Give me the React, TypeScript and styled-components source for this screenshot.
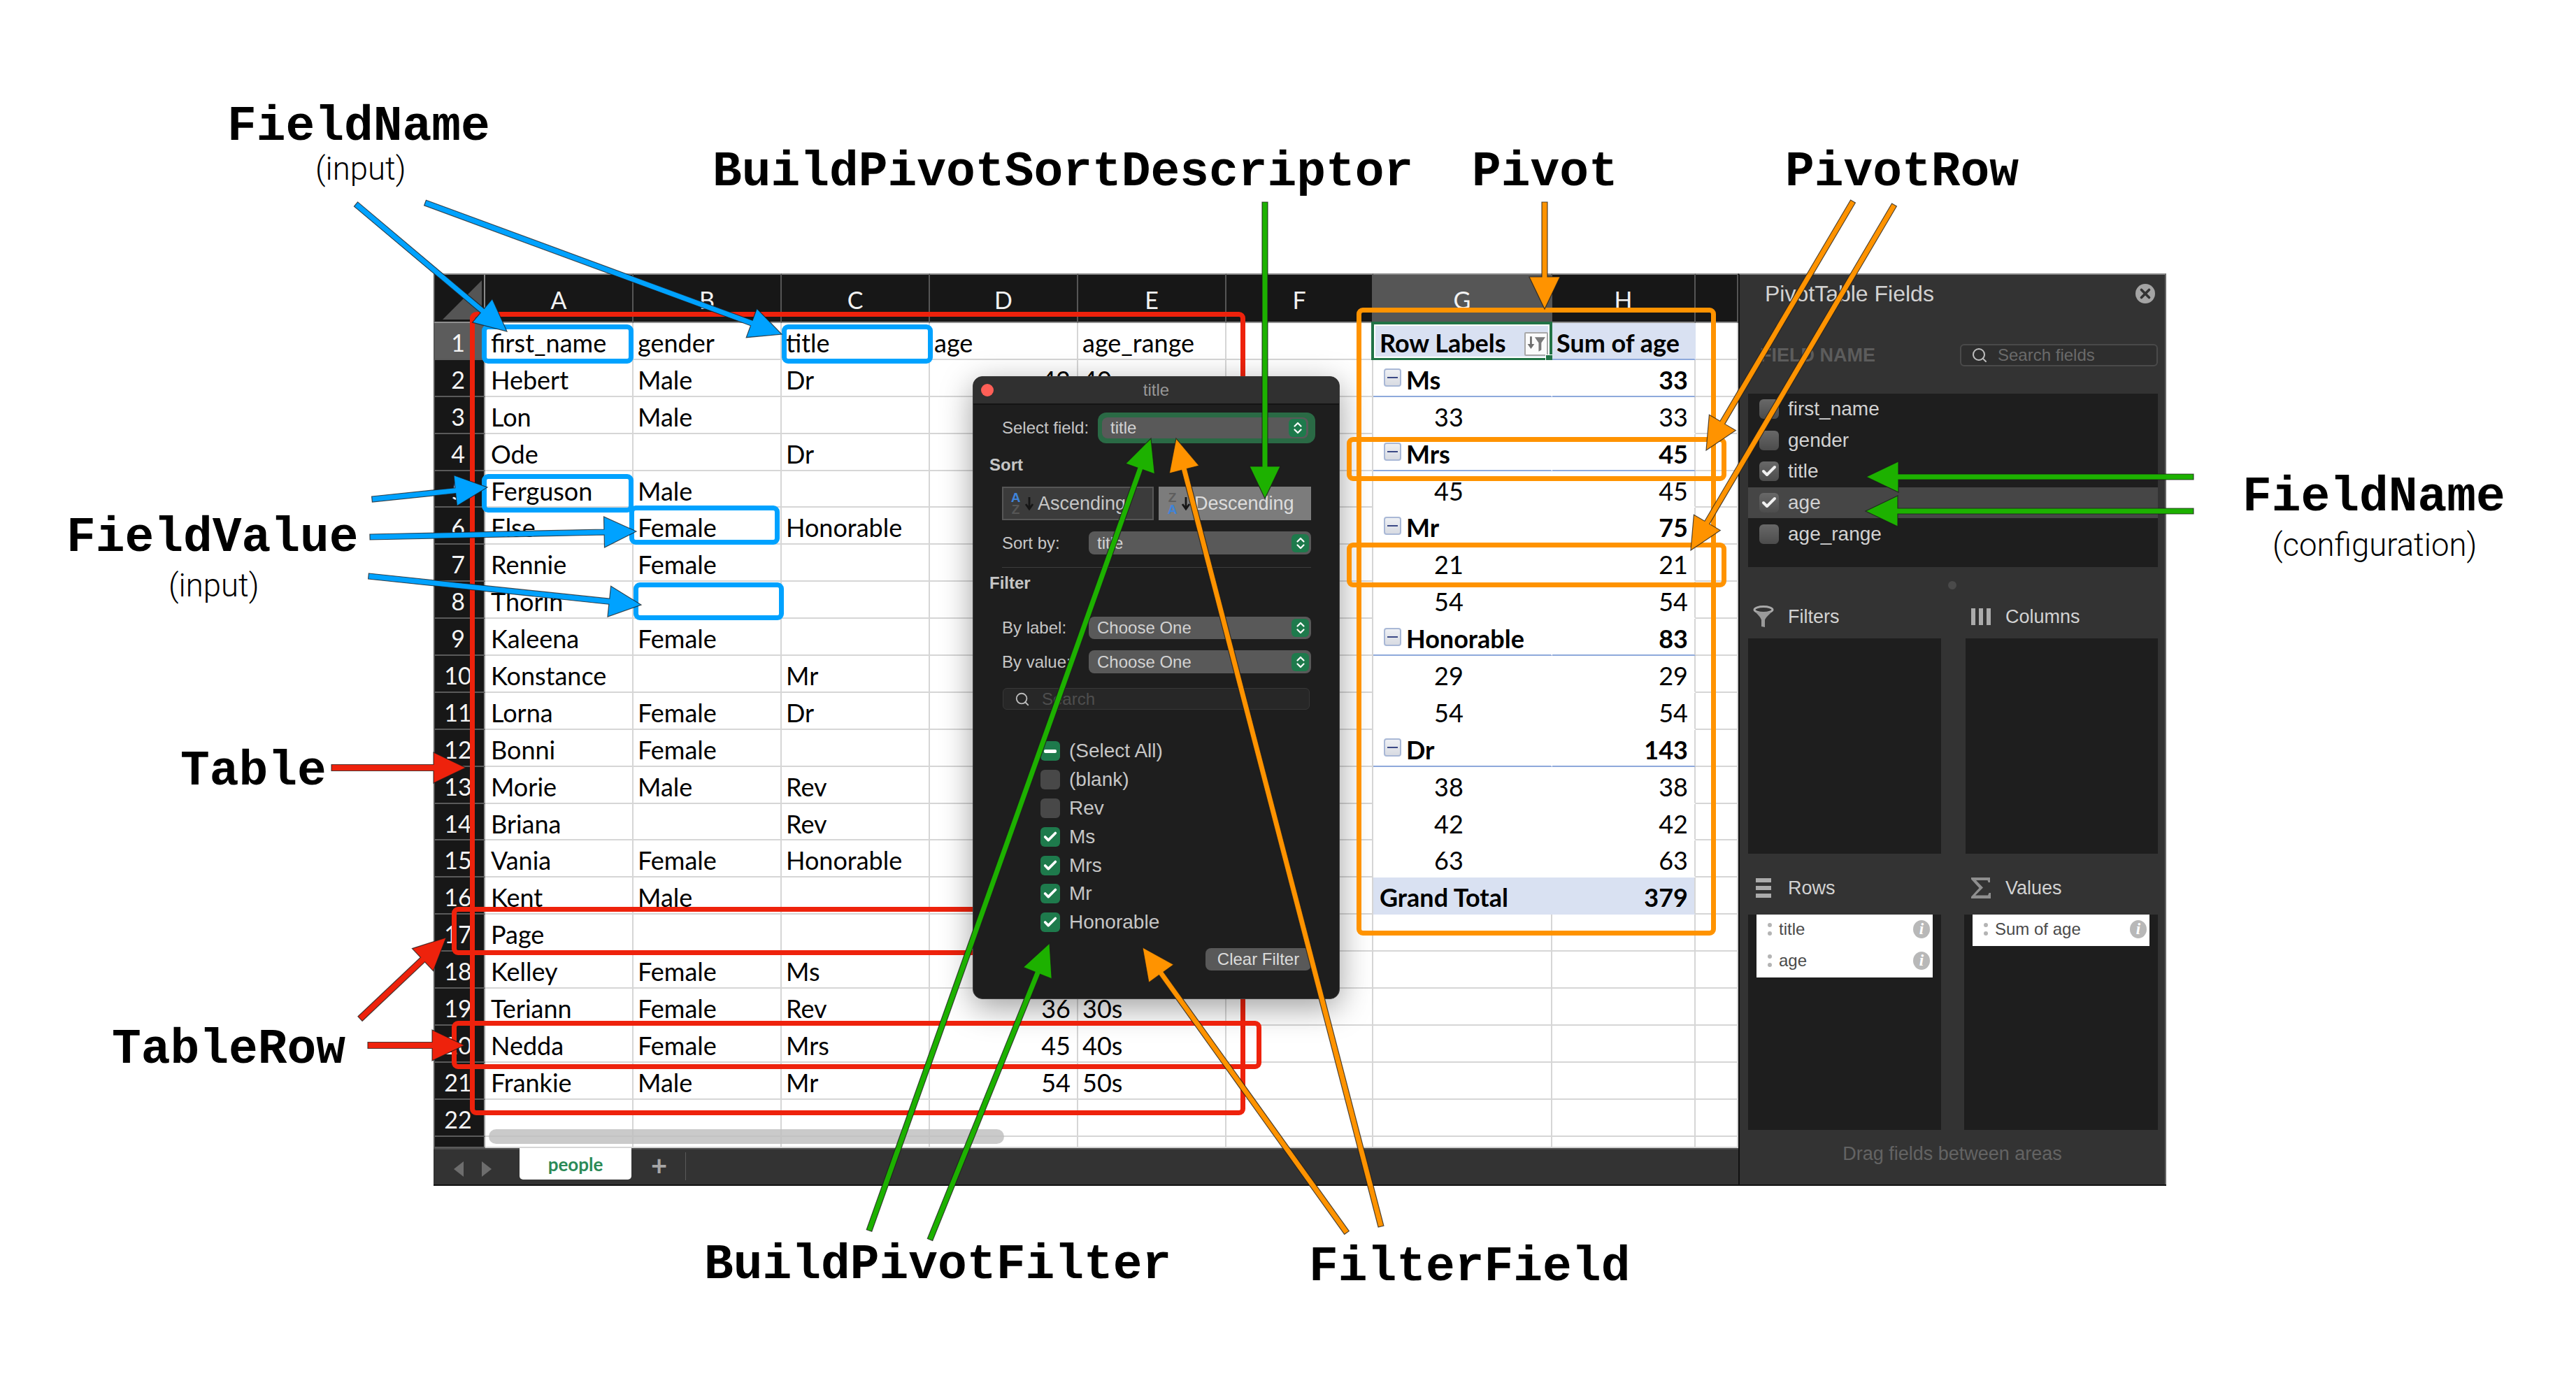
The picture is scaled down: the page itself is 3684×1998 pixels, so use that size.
import React from 'react';
import styled, { createGlobalStyle } from 'styled-components';
import { Check, Search, X } from 'lucide-react';

const BLUE = '#00a2ff';
const RED = '#ee220c';
const GREEN = '#1db100';
const ORANGE = '#ff9300';

const GlobalStyle = createGlobalStyle`
  html, body {
    margin: 0;
    background: #fff;
    font-family: "Liberation Sans", Arial, sans-serif;
  }
  * { box-sizing: border-box; }
`;

const Figure = styled.div`
  position: relative;
  width: 3684px;
  height: 1998px;
  padding: 391px 0 0 620px;
  overflow: hidden;
`;

const AppWindow = styled.div`
  display: flex;
  width: 2478px;
  height: 1305px;
  border-bottom: 2px solid #111;
`;

const Sheet = styled.div`
  position: relative;
  width: 1866px;
  display: flex;
  flex-direction: column;
  font-family: Lato, "Open Sans", sans-serif;
`;

const Grid = styled.div`
  display: grid;
  grid-template-columns: 74px 212px 212px 212px 212px 212px 210px 256px 205px 61px;
  grid-template-rows: 71px repeat(22, 52.9px) 1fr;
  flex: 1;
  min-height: 0;
`;

const ColHead = styled.div<{ $active?: boolean }>`
  display: flex;
  align-items: center;
  justify-content: center;
  padding-top: 4px;
  font-size: 34px;
  color: #f2f2f2;
  background: ${p => (p.$active ? '#565656' : '#171717')};
  border-top: 2px solid #8a8a8a;
  border-right: 2px solid #555;
  border-bottom: 2px solid #8f8f8f;
`;

const Corner = styled(ColHead)`
  position: relative;
  border-left: 2px solid #555;
  border-right: 2px solid #888;
  &::after {
    content: '';
    position: absolute;
    right: 3px;
    bottom: 3px;
    border-style: solid;
    border-width: 0 0 56px 56px;
    border-color: transparent transparent #555 transparent;
  }
`;

const RowHead = styled.div<{ $active?: boolean }>`
  display: flex;
  align-items: center;
  justify-content: center;
  padding: 4px 4px 0 0;
  font-size: 34px;
  color: #f4f4f4;
  background: ${p => (p.$active ? '#5c5c5c' : '#171717')};
  border-left: 2px solid #555;
  border-right: 2px solid #999;
  border-bottom: 2px solid #5a5a5a;
`;

type Line = 'grid' | 'none' | 'blue';

const Cell = styled.div<{ $bold?: boolean; $align?: string; $indent?: number; $fill?: string; $line?: Line; $noRight?: boolean }>`
  position: relative;
  display: flex;
  align-items: center;
  justify-content: ${p => p.$align || 'flex-start'};
  gap: 7px;
  padding: 5px 9px 0 ${p => p.$indent ?? 7}px;
  font-size: 36px;
  font-weight: ${p => (p.$bold ? 700 : 400)};
  color: #000;
  white-space: nowrap;
  background: ${p => p.$fill || '#fff'};
  border-right: 2px solid ${p => (p.$noRight ? (p.$fill || '#fff') : '#d6d6d6')};
  border-bottom: 2px solid ${p => (p.$line === 'blue' ? '#8ea9db' : p.$line === 'none' ? (p.$fill || '#fff') : '#d6d6d6')};
`;

const SelectedCell = styled(Cell)`
  &::before {
    content: '';
    position: absolute;
    inset: -2px -2px -3px -3px;
    border: 4px solid #217346;
    box-shadow: inset 0 0 0 2px #fff;
    pointer-events: none;
  }
  &::after {
    content: '';
    position: absolute;
    right: -5px;
    bottom: -7px;
    width: 11px;
    height: 11px;
    background: #217346;
    border: 1px solid #fff;
  }
`;

const FilterButton = styled.span`
  display: flex;
  align-items: center;
  justify-content: center;
  width: 34px;
  height: 34px;
  margin: 4px -5px 0 auto;
  background: #fbfbfb;
  border: 2px solid #a8a8a8;
  border-radius: 2px;
`;

const Collapse = styled.span`
  display: flex;
  align-items: center;
  justify-content: center;
  width: 25px;
  height: 26px;
  margin-top: -5px;
  background: linear-gradient(#eef0f4, #d8dbe2);
  border: 2px solid #a9b8d6;
  border-radius: 4px;
  &::after {
    content: '';
    width: 15px;
    height: 2px;
    background: #3c4a86;
  }
`;

const HScroll = styled.div`
  position: absolute;
  left: 79px;
  top: 1224px;
  width: 737px;
  height: 21px;
  border-radius: 11px;
  background: rgba(190, 190, 190, 0.82);
`;

const TabBar = styled.div`
  display: flex;
  align-items: flex-start;
  height: 52px;
  flex-shrink: 0;
  background: #333;
  border-top: 2px solid #4d4d4d;
`;

const TabArrows = styled.div`
  display: flex;
  align-items: center;
  gap: 26px;
  width: 123px;
  height: 50px;
  padding: 6px 0 0 29px;
`;

const TabArrow = styled.span<{ $right?: boolean }>`
  border-style: solid;
  border-color: transparent;
  border-width: 11px 0;
  ${p => (p.$right ? 'border-left: 14px solid #6d6d6d;' : 'border-right: 14px solid #6d6d6d;')}
`;

const ActiveTab = styled.div`
  display: flex;
  align-items: center;
  justify-content: center;
  width: 160px;
  height: 45px;
  margin-top: -2px;
  font-size: 26px;
  font-weight: 700;
  color: #2b8a57;
  background: #fff;
  border-radius: 0 0 5px 5px;
`;

const AddTab = styled.div`
  width: 78px;
  height: 40px;
  margin-top: 4px;
  padding-left: 28px;
  font-size: 40px;
  line-height: 36px;
  font-weight: 700;
  color: #a6a6a6;
  border-right: 1px solid #5a5a5a;
`;

/* Pivot field list */

const Panel = styled.div`
  width: 612px;
  display: flex;
  flex-direction: column;
  background: #333;
  border-left: 2px solid #111;
  border-right: 2px solid #666;
  border-top: 2px solid #8a8a8a;
  color: #d2d2d2;
`;

const PanelHeader = styled.div`
  display: flex;
  align-items: center;
  justify-content: space-between;
  height: 54px;
  padding: 0 14px 0 36px;
  font-size: 32px;
`;

const CloseButton = styled.span`
  display: flex;
  align-items: center;
  justify-content: center;
  width: 28px;
  height: 28px;
  border-radius: 50%;
  background: #a4a4a4;
  color: #333;
`;

const SearchRow = styled.div`
  display: flex;
  align-items: center;
  justify-content: space-between;
  margin: 45px 10px 0 29px;
  height: 32px;
`;

const FieldHeading = styled.span`
  font-size: 27px;
  font-weight: 700;
  color: #5c5c5c;
`;

const FieldSearch = styled.div`
  display: flex;
  align-items: center;
  gap: 14px;
  width: 283px;
  height: 32px;
  padding-left: 14px;
  font-size: 24px;
  color: #6a6a6a;
  background: #2e2e2e;
  border: 2px solid #4a4a4a;
  border-radius: 6px;
  svg { color: #bdbdbd; }
`;

const FieldList = styled.div`
  height: 248px;
  margin: 39px 10px 0 12px;
  background: #1e1e1e;
`;

const FieldRow = styled.div<{ $active?: boolean }>`
  display: flex;
  align-items: center;
  gap: 13px;
  height: 44.6px;
  padding-left: 16px;
  font-size: 28px;
  background: ${p => (p.$active ? '#464646' : 'transparent')};
`;

const FieldCheck = styled.span`
  display: flex;
  align-items: center;
  justify-content: center;
  width: 28px;
  height: 28px;
  border-radius: 6px;
  color: #f0f0f0;
  background: linear-gradient(#686868, #4c4c4c);
`;

const SplitHandle = styled.div`
  width: 12px;
  height: 12px;
  margin: 20px auto 0;
  border-radius: 50%;
  background: #4a4a4a;
`;

const AreaGrid = styled.div`
  display: grid;
  grid-template-columns: 276px 277px;
  grid-template-rows: 66px 308px 87px 308px;
  column-gap: 33px;
  margin: 4px 0 0 12px;
`;

const AreaHead = styled.div<{ $second?: boolean; $low?: boolean }>`
  display: flex;
  align-items: flex-end;
  gap: 20px;
  padding: 0 0 ${p => (p.$low ? 22 : 15)}px ${p => (p.$second ? 8 : 6)}px;
  font-size: 27px;
`;

const IconSlot = styled.span`
  display: flex;
  align-items: center;
  justify-content: center;
  width: 31px;
  height: 32px;
  color: #a9a9a9;
`;

const AreaBox = styled.div<{ $inset?: boolean }>`
  margin-left: ${p => (p.$inset ? 2 : 0)}px;
  padding: 0 12px;
  background: #1e1e1e;
`;

const AreaItem = styled.div`
  display: flex;
  align-items: center;
  gap: 10px;
  height: 45px;
  padding: 0 4px 3px 16px;
  font-size: 24px;
  color: #4a4a4a;
  background: #fff;
`;

const DragHandle = styled.span`
  display: flex;
  flex-direction: column;
  gap: 6px;
  &::before, &::after {
    content: '';
    width: 6px;
    height: 6px;
    border-radius: 50%;
    background: #b4b4b4;
  }
`;

const InfoIcon = styled.span`
  display: flex;
  align-items: center;
  justify-content: center;
  width: 24px;
  height: 26px;
  margin-left: auto;
  border-radius: 50%;
  font: italic 700 23px "Liberation Serif", serif;
  color: #fff;
  background: #b8b8b8;
`;

const DragHint = styled.div`
  flex: 1;
  display: flex;
  align-items: center;
  justify-content: center;
  padding: 0 0 10px 0;
  font-size: 27px;
  color: #636363;
`;

/* Floating filter dialog */

const Dialog = styled.div`
  position: absolute;
  left: 1391px;
  top: 538px;
  z-index: 2;
  width: 525px;
  height: 891px;
  background: #1e1e1e;
  border: 1px solid #3e3e3e;
  border-radius: 14px;
  box-shadow: 0 12px 46px rgba(0, 0, 0, 0.38);
  font-size: 24px;
  color: #c6c6c6;
`;

const DialogTitle = styled.div`
  position: relative;
  display: flex;
  align-items: center;
  justify-content: center;
  height: 40px;
  color: #979797;
  background: #303030;
  border-bottom: 2px solid #141414;
  border-radius: 13px 13px 0 0;
  &::before {
    content: '';
    position: absolute;
    left: 11px;
    top: 10px;
    width: 18px;
    height: 18px;
    border-radius: 50%;
    background: #ff5f57;
  }
`;

const DialogBody = styled.div`
  display: flex;
  flex-direction: column;
  padding: 0 40px 0 41px;
`;

const FormRow = styled.div<{ $top: number }>`
  display: flex;
  align-items: center;
  margin-top: ${p => p.$top}px;
`;

const FormLabel = styled.span`
  width: 124px;
  flex-shrink: 0;
  white-space: nowrap;
`;

const SectionTitle = styled.div<{ $top: number }>`
  height: 28px;
  margin: ${p => p.$top}px 0 0 -18px;
  font-weight: 700;
  line-height: 28px;
`;

const SelectRing = styled.div`
  flex: 1;
  margin: 0 -6px 0 13px;
  padding: 7px 10px 7px 6px;
  border-radius: 12px;
  background: #2a6a45;
`;

const Select = styled.div<{ $h: number }>`
  flex: 1;
  display: flex;
  align-items: center;
  justify-content: space-between;
  height: ${p => p.$h}px;
  padding: 0 3px 0 12px;
  color: #d2d2d2;
  background: #595959;
  border-radius: 8px;
`;

const StepperButton = styled.span`
  display: flex;
  align-items: center;
  justify-content: center;
  width: 25px;
  height: 26px;
  border-radius: 6px;
  color: #fff;
  background: #1e7a4c;
`;

const SortRow = styled.div`
  display: grid;
  grid-template-columns: 217px 218px;
  column-gap: 7px;
  margin-top: 17px;
`;

const SortButton = styled.div<{ $on?: boolean }>`
  display: flex;
  align-items: center;
  gap: 5px;
  height: 48px;
  padding-left: 10px;
  overflow: hidden;
  white-space: nowrap;
  font-size: 27px;
  color: ${p => (p.$on ? '#dcdcdc' : '#c6c6c6')};
  background: ${p => (p.$on ? '#7c7c7c' : '#3b3b3b')};
  border: 2px solid ${p => (p.$on ? '#7c7c7c' : '#565656')};
`;

const SortLetters = styled.span`
  display: flex;
  flex-direction: column;
  width: 15px;
  font-size: 19px;
  font-weight: 700;
  line-height: 17px;
  text-align: center;
`;

const SortLetter = styled.span<{ $hot?: boolean; $dim: string }>`
  color: ${p => (p.$hot ? '#3f83d8' : p.$dim)};
`;

const Divider = styled.div`
  height: 1px;
  margin-top: 18px;
  background: #3d3d3d;
`;

const DialogSearch = styled.div`
  display: flex;
  align-items: center;
  gap: 17px;
  height: 31px;
  margin: 21px 2px 0 1px;
  padding-left: 16px;
  color: #4e4e4e;
  background: #272727;
  border: 1px solid #383838;
  border-radius: 6px;
  svg { color: #bcbcbc; }
`;

const CheckList = styled.div`
  margin: 39px 0 0 55px;
  font-size: 28px;
`;

const CheckRow = styled.div`
  display: flex;
  align-items: center;
  gap: 13px;
  height: 40.8px;
`;

const CheckMark = styled.span<{ $on?: boolean }>`
  display: flex;
  align-items: center;
  justify-content: center;
  width: 28px;
  height: 28px;
  border-radius: 6px;
  color: #fff;
  background: ${p => (p.$on ? '#1e7a4c' : '#484848')};
`;

const MixedDash = styled.span`
  width: 18px;
  height: 5px;
  border-radius: 2px;
  background: #fff;
`;

const ClearButton = styled.div`
  align-self: flex-end;
  display: flex;
  align-items: center;
  justify-content: center;
  width: 151px;
  height: 32px;
  margin-top: 16px;
  color: #dcdcdc;
  background: #595959;
  border-radius: 8px;
`;

/* Annotations drawn over the screenshot */

const Callout = styled.div<{ $x: number; $y: number; $w: number; $h: number; $color: string; $above?: boolean }>`
  position: absolute;
  left: ${p => p.$x}px;
  top: ${p => p.$y}px;
  width: ${p => p.$w}px;
  height: ${p => p.$h}px;
  z-index: ${p => (p.$above ? 3 : 1)};
  border: 7px solid ${p => p.$color};
  border-radius: 9px;
`;

const Label = styled.div<{ $x: number; $y: number }>`
  position: absolute;
  left: ${p => p.$x}px;
  top: ${p => p.$y}px;
  font-family: "Liberation Mono", "Courier New", monospace;
  font-size: 69.6px;
  font-weight: 700;
  line-height: 1;
  color: #000;
  white-space: nowrap;
`;

const SubLabel = styled.div<{ $x: number; $y: number }>`
  position: absolute;
  left: ${p => p.$x}px;
  top: ${p => p.$y}px;
  font-family: Roboto, "Liberation Sans", sans-serif;
  font-size: 45.5px;
  font-weight: 300;
  line-height: 1;
  color: #000;
  white-space: nowrap;
`;

const Overlay = styled.svg`
  position: absolute;
  left: 0;
  top: 0;
  z-index: 4;
  pointer-events: none;
`;

const columns = ['A', 'B', 'C', 'D', 'E', 'F', 'G', 'H'];

const people: string[][] = [
  ['first_name', 'gender', 'title', 'age', 'age_range'],
  ['Hebert', 'Male', 'Dr', '42', '40s'],
  ['Lon', 'Male', '', '', ''],
  ['Ode', '', 'Dr', '', ''],
  ['Ferguson', 'Male', '', '', ''],
  ['Else', 'Female', 'Honorable', '', ''],
  ['Rennie', 'Female', '', '', ''],
  ['Thorin', '', '', '', ''],
  ['Kaleena', 'Female', '', '', ''],
  ['Konstance', '', 'Mr', '', ''],
  ['Lorna', 'Female', 'Dr', '', ''],
  ['Bonni', 'Female', '', '', ''],
  ['Morie', 'Male', 'Rev', '', ''],
  ['Briana', '', 'Rev', '', ''],
  ['Vania', 'Female', 'Honorable', '', ''],
  ['Kent', 'Male', '', '', ''],
  ['Page', '', '', '', ''],
  ['Kelley', 'Female', 'Ms', '', ''],
  ['Teriann', 'Female', 'Rev', '36', '30s'],
  ['Nedda', 'Female', 'Mrs', '45', '40s'],
  ['Frankie', 'Male', 'Mr', '54', '50s'],
  ['', '', '', '', ''],
];

type PivotRow = { label: string; value: string; kind: 'group' | 'leaf' | 'total' };

const pivot: PivotRow[] = [
  { label: 'Ms', value: '33', kind: 'group' },
  { label: '33', value: '33', kind: 'leaf' },
  { label: 'Mrs', value: '45', kind: 'group' },
  { label: '45', value: '45', kind: 'leaf' },
  { label: 'Mr', value: '75', kind: 'group' },
  { label: '21', value: '21', kind: 'leaf' },
  { label: '54', value: '54', kind: 'leaf' },
  { label: 'Honorable', value: '83', kind: 'group' },
  { label: '29', value: '29', kind: 'leaf' },
  { label: '54', value: '54', kind: 'leaf' },
  { label: 'Dr', value: '143', kind: 'group' },
  { label: '38', value: '38', kind: 'leaf' },
  { label: '42', value: '42', kind: 'leaf' },
  { label: '63', value: '63', kind: 'leaf' },
  { label: 'Grand Total', value: '379', kind: 'total' },
];

type Arrow = { from: [number, number]; to: [number, number]; color: string; shaft?: number };

const arrows: Arrow[] = [
  { from: [509, 292], to: [725, 474], color: BLUE },
  { from: [608, 290], to: [1118, 478], color: BLUE },
  { from: [532, 714], to: [697, 697], color: BLUE },
  { from: [529, 768], to: [910, 760], color: BLUE },
  { from: [527, 824], to: [917, 865], color: BLUE },
  { from: [474, 1098], to: [666, 1098], color: RED, shaft: 9 },
  { from: [515, 1457], to: [638, 1341], color: RED, shaft: 9 },
  { from: [526, 1495], to: [664, 1495], color: RED, shaft: 9 },
  { from: [1809, 289], to: [1809, 713], color: GREEN },
  { from: [1243, 1760], to: [1646, 627], color: GREEN },
  { from: [1330, 1773], to: [1501, 1349], color: GREEN },
  { from: [3137, 682], to: [2669, 682], color: GREEN },
  { from: [3137, 731], to: [2668, 731], color: GREEN },
  { from: [2209, 289], to: [2209, 442], color: ORANGE },
  { from: [2650, 288], to: [2440, 644], color: ORANGE },
  { from: [2709, 293], to: [2418, 787], color: ORANGE },
  { from: [1926, 1763], to: [1634, 1355], color: ORANGE },
  { from: [1975, 1754], to: [1682, 627], color: ORANGE },
];

const arrowPoints = ({ from, to, shaft = 8 }: Arrow) => {
  const headLen = 46;
  const headHalf = 22;
  const dx = to[0] - from[0];
  const dy = to[1] - from[1];
  const len = Math.hypot(dx, dy);
  const ux = dx / len;
  const uy = dy / len;
  const at = (along: number, side: number) =>
    `${(from[0] + ux * along - uy * side).toFixed(1)},${(from[1] + uy * along + ux * side).toFixed(1)}`;
  const neck = len - headLen;
  return [
    at(0, -shaft / 2),
    at(neck, -shaft / 2),
    at(neck, -headHalf),
    at(len, 0),
    at(neck, headHalf),
    at(neck, shaft / 2),
    at(0, shaft / 2),
  ].join(' ');
};

const Stepper = () => (
  <StepperButton>
    <svg width="14" height="20" viewBox="0 0 14 20" fill="none" stroke="currentColor" strokeWidth="2.2" strokeLinecap="round" strokeLinejoin="round">
      <path d="M2.5 7.5 7 3l4.5 4.5M2.5 12.5 7 17l4.5-4.5" />
    </svg>
  </StepperButton>
);

const SortGlyph = ({ top, bottom, on }: { top: string; bottom: string; on?: boolean }) => (
  <>
    <SortLetters>
      <SortLetter $hot={top === 'A'} $dim={on ? '#5e5e5e' : '#565656'}>{top}</SortLetter>
      <SortLetter $hot={bottom === 'A'} $dim={on ? '#5e5e5e' : '#565656'}>{bottom}</SortLetter>
    </SortLetters>
    <svg width="14" height="20" viewBox="0 0 14 20" fill="none" stroke="#161616" strokeWidth="2.8">
      <path d="M7 1v16M2 11l5 7 5-7" />
    </svg>
  </>
);

const FilterGlyph = () => (
  <svg width="28" height="28" viewBox="0 0 26 26">
    <path d="M6 3v14" stroke="#6f6f6f" strokeWidth="2.6" fill="none" />
    <path d="M1.500 13 6 19.500 10.500 13z" fill="#6f6f6f" />
    <path d="M11 4h14l-5.200 7.400V21l-3.600 2V11.400z" fill="#7a7a7a" />
  </svg>
);

const FunnelIcon = () => (
  <svg width="30" height="32" viewBox="0 0 30 32" fill="none">
    <ellipse cx="15" cy="6" rx="13" ry="4.5" stroke="#a9a9a9" strokeWidth="3" />
    <path d="M3 9c5 5 8 8 9 12v9l5 1V21c1-4 5-7 10-12" fill="#9a9a9a" />
  </svg>
);

const ColumnsIcon = () => (
  <svg width="28" height="24" viewBox="0 0 28 24" fill="#ababab">
    <rect x="0" y="0" width="6" height="24" />
    <rect x="11" y="0" width="6" height="24" />
    <rect x="22" y="0" width="6" height="24" />
  </svg>
);

const RowsIcon = () => (
  <svg width="22" height="28" viewBox="0 0 22 28" fill="#ababab">
    <rect x="0" y="0" width="22" height="6" />
    <rect x="0" y="11" width="22" height="6" />
    <rect x="0" y="22" width="22" height="6" />
  </svg>
);

const SigmaIcon = () => (
  <svg width="28" height="30" viewBox="0 0 28 30" fill="#8f8f8f">
    <path d="M0 0h27v7h-2.500l-1-3H7l10 10.500L6 25.500h18l1.500-3.500H28v8H0v-2.500L11.500 15 0 2.500z" />
  </svg>
);

const SheetGrid = () => (
  <Grid>
    <Corner />
    {columns.map(c => (
      <ColHead key={c} $active={c === 'G'}>{c}</ColHead>
    ))}
    <ColHead />
    {people.map((row, i) => {
      const pr = i >= 1 ? pivot[i - 1] : undefined;
      return (
        <React.Fragment key={i}>
          <RowHead $active={i === 0}>{i + 1}</RowHead>
          {row.map((text, c) => (
            <Cell key={c} $align={c === 3 && i > 0 ? 'flex-end' : undefined} $indent={c === 0 ? 8 : 6}>
              {text}
            </Cell>
          ))}
          <Cell />
          {i === 0 && (
            <>
              <SelectedCell $bold $fill="#d9e1f2" $line="blue" $noRight $indent={9}>
                Row Labels
                <FilterButton><FilterGlyph /></FilterButton>
              </SelectedCell>
              <Cell $bold $fill="#d9e1f2" $line="blue" $noRight $indent={6}>Sum of age</Cell>
            </>
          )}
          {pr && (
            <>
              <Cell
                $bold={pr.kind !== 'leaf'}
                $fill={pr.kind === 'total' ? '#d9e1f2' : undefined}
                $line={pr.kind === 'group' ? 'blue' : 'none'}
                $noRight
                $indent={pr.kind === 'leaf' ? 87 : pr.kind === 'group' ? 15 : 9}
              >
                {pr.kind === 'group' && <Collapse />}
                {pr.label}
              </Cell>
              <Cell
                $bold={pr.kind !== 'leaf'}
                $align="flex-end"
                $fill={pr.kind === 'total' ? '#d9e1f2' : undefined}
                $line={pr.kind === 'group' ? 'blue' : 'none'}
              >
                {pr.value}
              </Cell>
            </>
          )}
          {i > 15 && (
            <>
              <Cell />
              <Cell />
            </>
          )}
          <Cell />
        </React.Fragment>
      );
    })}
    <RowHead />
    {[...columns, 'I'].map(c => (
      <Cell key={c} />
    ))}
  </Grid>
);

const fieldRows = [
  { name: 'first_name', on: false },
  { name: 'gender', on: false },
  { name: 'title', on: true },
  { name: 'age', on: true, active: true },
  { name: 'age_range', on: false },
];

const FieldsPanel = () => (
  <Panel>
    <PanelHeader>
      PivotTable Fields
      <CloseButton><X size={22} strokeWidth={4} /></CloseButton>
    </PanelHeader>
    <SearchRow>
      <FieldHeading>FIELD NAME</FieldHeading>
      <FieldSearch>
        <Search size={24} strokeWidth={2} />
        Search fields
      </FieldSearch>
    </SearchRow>
    <FieldList>
      {fieldRows.map(f => (
        <FieldRow key={f.name} $active={f.active}>
          <FieldCheck>{f.on && <Check size={24} strokeWidth={4} />}</FieldCheck>
          {f.name}
        </FieldRow>
      ))}
    </FieldList>
    <SplitHandle />
    <AreaGrid>
      <AreaHead><IconSlot><FunnelIcon /></IconSlot>Filters</AreaHead>
      <AreaHead $second><IconSlot><ColumnsIcon /></IconSlot>Columns</AreaHead>
      <AreaBox />
      <AreaBox $inset />
      <AreaHead $low><IconSlot><RowsIcon /></IconSlot>Rows</AreaHead>
      <AreaHead $low $second><IconSlot><SigmaIcon /></IconSlot>Values</AreaHead>
      <AreaBox>
        <AreaItem><DragHandle />title<InfoIcon>i</InfoIcon></AreaItem>
        <AreaItem><DragHandle />age<InfoIcon>i</InfoIcon></AreaItem>
      </AreaBox>
      <AreaBox>
        <AreaItem><DragHandle />Sum of age<InfoIcon>i</InfoIcon></AreaItem>
      </AreaBox>
    </AreaGrid>
    <DragHint>Drag fields between areas</DragHint>
  </Panel>
);

const filterItems = [
  { name: '(blank)', on: false },
  { name: 'Rev', on: false },
  { name: 'Ms', on: true },
  { name: 'Mrs', on: true },
  { name: 'Mr', on: true },
  { name: 'Honorable', on: true },
];

const FilterDialog = () => (
  <Dialog>
    <DialogTitle>title</DialogTitle>
    <DialogBody>
      <FormRow $top={11}>
        <FormLabel>Select field:</FormLabel>
        <SelectRing>
          <Select $h={30}>title<Stepper /></Select>
        </SelectRing>
      </FormRow>
      <SectionTitle $top={17}>Sort</SectionTitle>
      <SortRow>
        <SortButton>
          <SortGlyph top="A" bottom="Z" />
          Ascending
        </SortButton>
        <SortButton $on>
          <SortGlyph top="Z" bottom="A" on />
          Descending
        </SortButton>
      </SortRow>
      <FormRow $top={16}>
        <FormLabel>Sort by:</FormLabel>
        <Select $h={33}>title<Stepper /></Select>
      </FormRow>
      <Divider />
      <SectionTitle $top={8}>Filter</SectionTitle>
      <FormRow $top={34}>
        <FormLabel>By label:</FormLabel>
        <Select $h={32}>Choose One<Stepper /></Select>
      </FormRow>
      <FormRow $top={16}>
        <FormLabel>By value:</FormLabel>
        <Select $h={33}>Choose One<Stepper /></Select>
      </FormRow>
      <DialogSearch>
        <Search size={22} strokeWidth={2} />
        Search
      </DialogSearch>
      <CheckList>
        <CheckRow>
          <CheckMark $on><MixedDash /></CheckMark>
          (Select All)
        </CheckRow>
        {filterItems.map(item => (
          <CheckRow key={item.name}>
            <CheckMark $on={item.on}>{item.on && <Check size={22} strokeWidth={4} />}</CheckMark>
            {item.name}
          </CheckRow>
        ))}
      </CheckList>
      <ClearButton>Clear Filter</ClearButton>
    </DialogBody>
  </Dialog>
);

export default function App() {
  return (
    <Figure>
      <GlobalStyle />
      <AppWindow>
        <Sheet>
          <SheetGrid />
          <HScroll />
          <TabBar>
            <TabArrows>
              <TabArrow />
              <TabArrow $right />
            </TabArrows>
            <ActiveTab>people</ActiveTab>
            <AddTab>+</AddTab>
          </TabBar>
        </Sheet>
        <FieldsPanel />
      </AppWindow>

      <Callout $x={672} $y={446} $w={1109} $h={1149} $color={RED} />
      <Callout $x={646} $y={1297} $w={1158} $h={69} $color={RED} />
      <FilterDialog />
      <Callout $above $x={646} $y={1460} $w={1158} $h={69} $color={RED} />

      <Callout $above $x={689} $y={464} $w={217} $h={56} $color={BLUE} />
      <Callout $above $x={1118} $y={464} $w={216} $h={56} $color={BLUE} />
      <Callout $above $x={689} $y={678} $w={217} $h={55} $color={BLUE} />
      <Callout $above $x={900} $y={723} $w={215} $h={56} $color={BLUE} />
      <Callout $above $x={906} $y={833} $w={215} $h={54} $color={BLUE} />

      <Callout $above $x={1940} $y={440} $w={514} $h={898} $color={ORANGE} />
      <Callout $above $x={1926} $y={625} $w={543} $h={63} $color={ORANGE} />
      <Callout $above $x={1926} $y={776} $w={543} $h={64} $color={ORANGE} />

      <Label $x={325} $y={147}>FieldName</Label>
      <SubLabel $x={451} $y={219}>(input)</SubLabel>
      <Label $x={1019} $y={212}>BuildPivotSortDescriptor</Label>
      <Label $x={2105} $y={212}>Pivot</Label>
      <Label $x={2553} $y={212}>PivotRow</Label>
      <Label $x={95} $y={735}>FieldValue</Label>
      <SubLabel $x={241} $y={815}>(input)</SubLabel>
      <Label $x={258} $y={1069}>Table</Label>
      <Label $x={160} $y={1467}>TableRow</Label>
      <Label $x={1007} $y={1775}>BuildPivotFilter</Label>
      <Label $x={1872} $y={1778}>FilterField</Label>
      <Label $x={3207} $y={677}>FieldName</Label>
      <SubLabel $x={3250} $y={757}>(configuration)</SubLabel>

      <Overlay width="3684" height="1998" viewBox="0 0 3684 1998">
        {arrows.map((a, i) => (
          <polygon key={i} points={arrowPoints(a)} fill={a.color} stroke="#1a1a1a" strokeOpacity="0.75" strokeWidth="1.2" />
        ))}
      </Overlay>
    </Figure>
  );
}
